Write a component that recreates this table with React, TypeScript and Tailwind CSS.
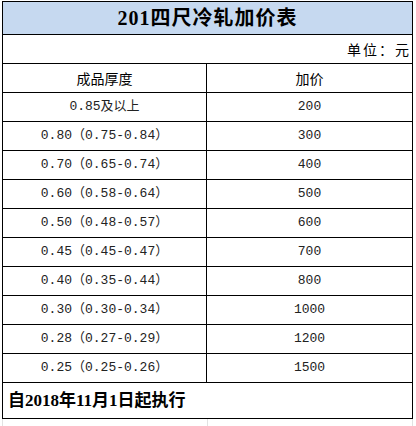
import React from "react";

const rows: [string, string][] = [
  ["0.85及以上", "200"],
  ["0.80（0.75-0.84）", "300"],
  ["0.70（0.65-0.74）", "400"],
  ["0.60（0.58-0.64）", "500"],
  ["0.50（0.48-0.57）", "600"],
  ["0.45（0.45-0.47）", "700"],
  ["0.40（0.35-0.44）", "800"],
  ["0.30（0.30-0.34）", "1000"],
  ["0.28（0.27-0.29）", "1200"],
  ["0.25（0.25-0.26）", "1500"],
];

const mono = "font-['Liberation_Mono','Noto_Sans_CJK_SC',monospace]";

export default function App() {
  return (
    <div className="w-[416px] h-[426px] bg-white overflow-hidden text-black font-['Noto_Sans_CJK_SC',sans-serif]">
      <div className="ml-[2px] mt-[1px] w-[411px] border-[1.5px] border-black">
        {/* title */}
        <div className="h-[33px] bg-[#c6d9f0] border-b border-black flex items-center justify-center">
          <span className="text-[20px] font-bold font-['Liberation_Serif','Noto_Sans_CJK_SC',serif] tracking-[1px]">
            201四尺冷轧加价表
          </span>
        </div>

        {/* unit */}
        <div className="h-[29px] border-b border-black flex items-center justify-end pr-[1px]">
          <span className="text-[14px] tracking-[2px]">单位：元</span>
        </div>

        {/* column header */}
        <div className="h-[29px] border-b border-black grid grid-cols-[204px_1fr] text-[14px]">
          <div className="flex items-center justify-center border-r border-black">成品厚度</div>
          <div className="flex items-center justify-center">加价</div>
        </div>

        {rows.map(([t, p], i) => (
          <div
            key={i}
            className={`h-[29px] border-b border-black grid grid-cols-[204px_1fr] text-[13px] text-[#222] ${mono}`}
          >
            <div className="flex items-center justify-center border-r border-black">{t}</div>
            <div className="flex items-center justify-center">{p}</div>
          </div>
        ))}

        {/* footer */}
        <div className="h-[35px] flex items-center pl-[5px]">
          <span className="text-[17px] font-bold font-['Liberation_Serif','Noto_Sans_CJK_SC',serif]">
            自2018年11月1日起执行
          </span>
        </div>
      </div>

      {/* faint sheet gridlines below */}
      <div className="ml-[2px] w-[411px] h-[8px] grid grid-cols-[205px_1fr] border-l border-r border-[#e2e2e2]">
        <div className="border-r border-[#e2e2e2]" />
        <div />
      </div>
    </div>
  );
}
